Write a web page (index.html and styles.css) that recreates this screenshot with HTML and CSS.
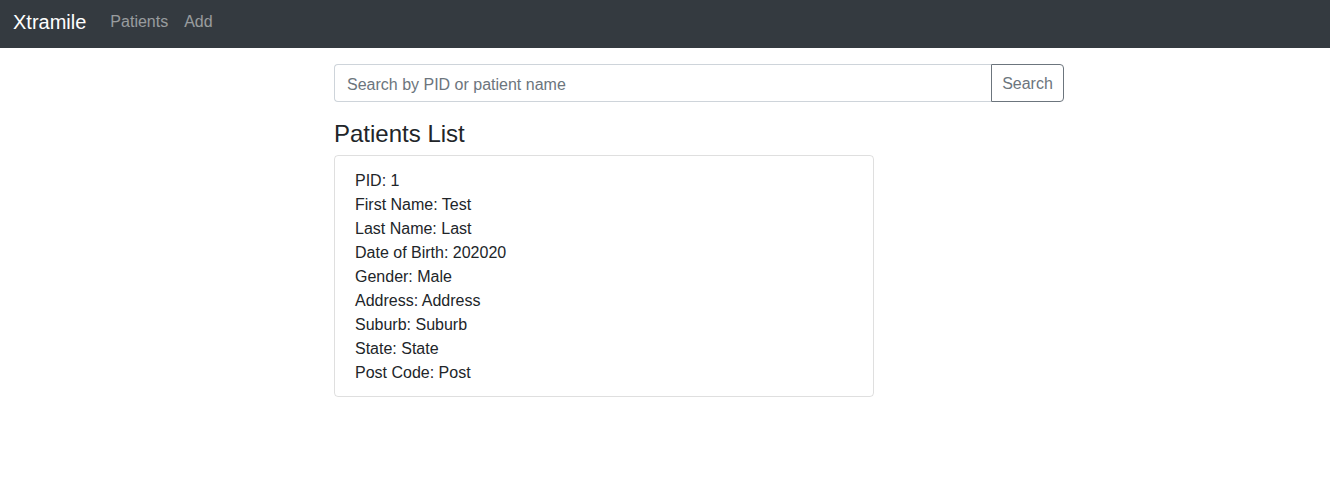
FILE: index.html
```html
<!DOCTYPE html>
<html lang="en">
<head>
<meta charset="utf-8">
<title>Xtramile</title>
<link rel="stylesheet" href="styles.css">
</head>
<body>
<nav class="navbar">
  <a class="brand" href="#">Xtramile</a>
  <div class="nav-links">
    <a class="nav-link" href="#">Patients</a>
    <a class="nav-link" href="#">Add</a>
  </div>
</nav>
<main class="main">
  <div class="search-col">
    <div class="input-group">
      <input class="search-input" type="text" placeholder="Search by PID or patient name">
      <button class="search-btn" type="button">Search</button>
    </div>
  </div>
  <div class="list-col">
    <h4 class="list-title">Patients List</h4>
    <ul class="list-group">
      <li class="list-item">
        <div>PID: 1</div>
        <div>First Name: Test</div>
        <div>Last Name: Last</div>
        <div>Date of Birth: 202020</div>
        <div>Gender: Male</div>
        <div>Address: Address</div>
        <div>Suburb: Suburb</div>
        <div>State: State</div>
        <div>Post Code: Post</div>
      </li>
    </ul>
  </div>
</main>
</body>
</html>
```

FILE: styles.css
```css
* { box-sizing: border-box; }
body {
  margin: 0;
  font-family: "Liberation Sans", Arial, sans-serif;
  font-size: 16px;
  line-height: 1.5;
  color: #212529;
  background: #fff;
}
.navbar {
  display: flex;
  align-items: center;
  height: 48px;
  padding: 0 12px 4px 13px;
  background: #343a40;
}
.brand {
  font-size: 20px;
  line-height: 30px;
  color: #fff;
  text-decoration: none;
  margin-right: 16px;
}
.nav-links { display: flex; }
.nav-link {
  padding: 0 8px;
  color: rgba(255,255,255,.5);
  text-decoration: none;
}
.main {
  padding: 16px 0 0 334px;
}
.search-col { width: 730px; }
.input-group {
  display: flex;
  height: 38px;
  margin-bottom: 16px;
}
.search-input {
  flex: 1;
  min-width: 0;
  height: 38px;
  padding: 8px 12px 4px;
  font: inherit;
  color: #495057;
  border: 1px solid #ced4da;
  border-right: none;
  border-radius: 4px 0 0 4px;
  outline: none;
}
.search-input::placeholder { color: #6c757d; opacity: 1; }
.search-btn {
  flex: none;
  width: 73px;
  height: 38px;
  padding: 2px 0 0;
  font: inherit;
  text-align: center;
  color: #6c757d;
  background: transparent;
  border: 1px solid #6c757d;
  border-radius: 0 4px 4px 0;
}
.list-col { width: 540px; }
.list-title {
  margin: 0 0 8px;
  padding-top: 2px;
  height: 29px;
  font-size: 24px;
  font-weight: 400;
  line-height: 1.2;
}
.list-group {
  margin: 0;
  padding: 0;
  list-style: none;
}
.list-item {
  padding: 13px 20px 11px;
  border: 1px solid rgba(0,0,0,.125);
  border-radius: 4px;
}
```
